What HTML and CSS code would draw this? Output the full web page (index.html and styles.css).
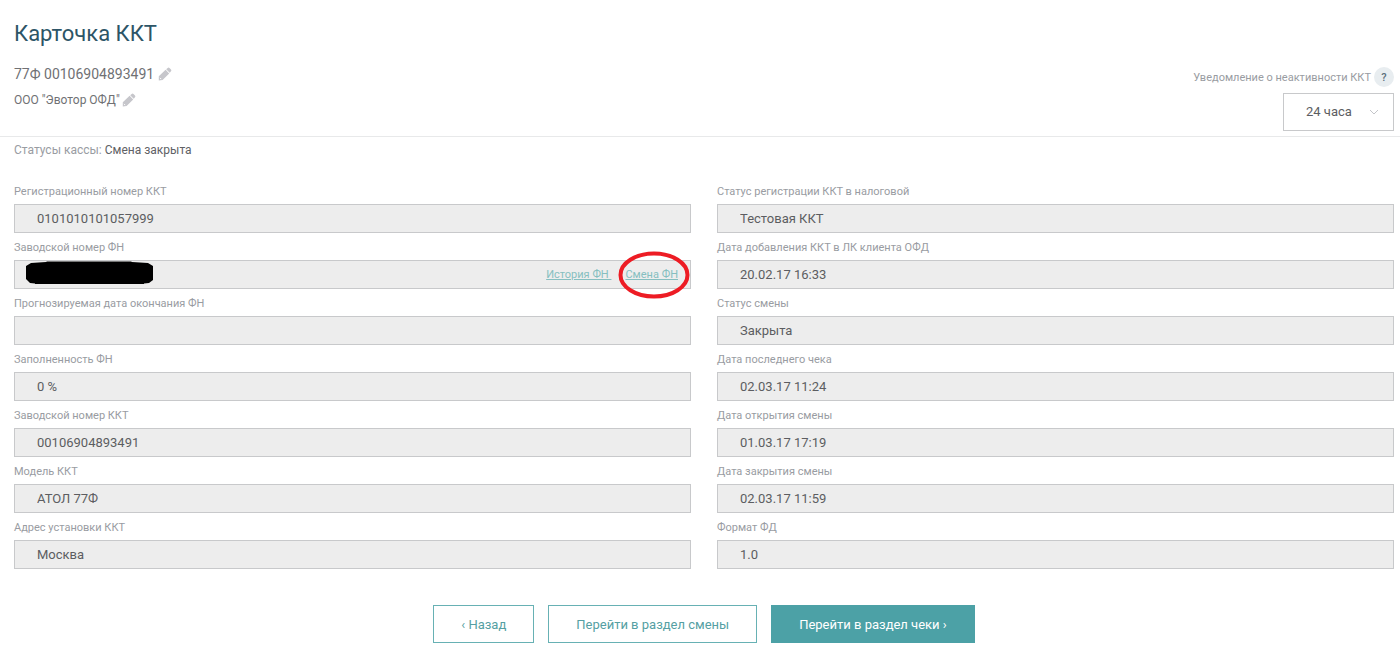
FILE: index.html
```html
<!DOCTYPE html>
<html lang="ru">
<head>
<meta charset="utf-8">
<meta name="viewport" content="width=device-width, initial-scale=1">
<title>Карточка ККТ</title>
<link rel="stylesheet" href="styles.css">
</head>
<body>
<header class="header">
  <div class="summary">
    <h1 class="title">Карточка ККТ</h1>
    <div class="name-row">
      <span>77Ф 00106904893491</span>
      <button class="edit" type="button" aria-label="Изменить название">
        <svg width="14" height="14" viewBox="0 0 14 14" aria-hidden="true"><path d="M.8 9.200 7.600 2.800l3.600 3.600L4.600 12.900.8 13.400ZM8.200 2.200 9.700.9q.9-.7 1.800.1L13 2.500q.8.900 0 1.800l-1.300 1.500Z"/><path class="tip" d="m2 10.900 1.200 1.200"/></svg>
      </button>
    </div>
    <div class="owner-row">
      <span>ООО "Эвотор ОФД"</span>
      <button class="edit" type="button" aria-label="Изменить организацию">
        <svg width="14" height="14" viewBox="0 0 14 14" aria-hidden="true"><path d="M.8 9.200 7.600 2.800l3.600 3.600L4.600 12.900.8 13.400ZM8.200 2.200 9.700.9q.9-.7 1.800.1L13 2.500q.8.900 0 1.800l-1.300 1.500Z"/><path class="tip" d="m2 10.900 1.200 1.200"/></svg>
      </button>
    </div>
  </div>
  <div class="notice">
    <div class="notice-caption">
      <label for="notice">Уведомление о неактивности ККТ</label>
      <button class="help" type="button">?</button>
    </div>
    <div class="select-box">
      <select class="select" id="notice"><option>24 часа</option></select>
      <svg class="chevron" width="10" height="6" viewBox="0 0 10 6" aria-hidden="true"><path d="m1 1 4 4 4-4"/></svg>
    </div>
  </div>
</header>
<main class="content">
  <p class="status">Статусы кассы: <span class="status-value">Смена закрыта</span></p>
  <form class="fields">
    <div class="column">
      <div class="field"><label class="label" for="reg">Регистрационный номер ККТ</label><input class="input" id="reg" value="0101010101057999" readonly></div>
      <div class="field">
        <label class="label" for="fn">Заводской номер ФН</label>
        <div class="input-box">
          <input class="input" id="fn" readonly>
          <svg class="redaction" width="128" height="24" viewBox="0 0 128 24" aria-hidden="true"><path d="M5 2 20 1 21 .5H105L106 1 122 2 127 5V19L123 22 118 22.500V23H9V22.500L4 22 0 18V5Z"/></svg>
          <div class="links">
            <a class="link" href="#history">История ФН&nbsp;</a>
            <a class="link marked" href="#change">Смена ФН<svg class="ring" width="72" height="48" viewBox="0 0 72 48" aria-hidden="true"><ellipse cx="36" cy="24" rx="33.500" ry="21.500"/></svg></a>
          </div>
        </div>
      </div>
      <div class="field"><label class="label" for="end">Прогнозируемая дата окончания ФН</label><input class="input" id="end" readonly></div>
      <div class="field"><label class="label" for="fill">Заполненность ФН</label><input class="input" id="fill" value="0 %" readonly></div>
      <div class="field"><label class="label" for="serial">Заводской номер ККТ</label><input class="input" id="serial" value="00106904893491" readonly></div>
      <div class="field"><label class="label" for="model">Модель ККТ</label><input class="input" id="model" value="АТОЛ 77Ф" readonly></div>
      <div class="field"><label class="label" for="address">Адрес установки ККТ</label><input class="input" id="address" value="Москва" readonly></div>
    </div>
    <div class="column">
      <div class="field"><label class="label" for="tax">Статус регистрации ККТ в налоговой</label><input class="input" id="tax" value="Тестовая ККТ" readonly></div>
      <div class="field"><label class="label" for="added">Дата добавления ККТ в ЛК клиента ОФД</label><input class="input" id="added" value="20.02.17 16:33" readonly></div>
      <div class="field"><label class="label" for="shift">Статус смены</label><input class="input" id="shift" value="Закрыта" readonly></div>
      <div class="field"><label class="label" for="last">Дата последнего чека</label><input class="input" id="last" value="02.03.17 11:24" readonly></div>
      <div class="field"><label class="label" for="opened">Дата открытия смены</label><input class="input" id="opened" value="01.03.17 17:19" readonly></div>
      <div class="field"><label class="label" for="closed">Дата закрытия смены</label><input class="input" id="closed" value="02.03.17 11:59" readonly></div>
      <div class="field"><label class="label" for="format">Формат ФД</label><input class="input" id="format" value="1.0" readonly></div>
    </div>
  </form>
  <div class="actions">
    <button class="button" type="button">‹ Назад</button>
    <button class="button" type="button">Перейти в раздел смены</button>
    <button class="button primary" type="button">Перейти в раздел чеки ›</button>
  </div>
</main>
</body>
</html>
```
FILE: styles.css
```css
* {
  box-sizing: border-box;
}

body {
  margin: 0;
  background: #fff;
  color: #5c5d61;
  font-family: Roboto, "Liberation Sans", sans-serif;
  font-size: 13px;
}

button,
input,
select {
  font: inherit;
  color: inherit;
}

.header {
  display: flex;
  justify-content: space-between;
  align-items: flex-end;
  padding: 20px 6px 5px 14px;
  border-bottom: 1px solid #e8e9ea;
}

.title {
  margin: 0;
  color: #2d5567;
  font-size: 22px;
  font-weight: 400;
  line-height: 28px;
}

.name-row,
.owner-row {
  display: flex;
  align-items: center;
  gap: 4px;
  color: #707174;
  line-height: 26px;
}

.name-row {
  margin-top: 13px;
  font-size: 14px;
}

.owner-row {
  gap: 2px;
  margin-bottom: 18px;
  font-size: 12px;
}

.edit {
  display: flex;
  padding: 0;
  border: 0;
  background: none;
  fill: #c6c6cb;
}

.tip {
  stroke: #fff;
}

.notice {
  display: flex;
  flex-direction: column;
  align-items: flex-end;
  gap: 6px;
}

.notice-caption {
  display: flex;
  align-items: center;
  gap: 3px;
  color: #999ca2;
  font-size: 11px;
}

.help {
  width: 20px;
  height: 20px;
  padding: 0;
  border: 0;
  border-radius: 50%;
  background: #e8edf0;
  color: #5c707c;
  font-size: 11px;
  font-weight: 500;
}

.select-box {
  position: relative;
}

.select {
  width: 111px;
  height: 38px;
  padding: 0 22px 2px;
  border: 1px solid #c8c9cb;
  border-radius: 0;
  background: #fff;
  appearance: none;
}

.chevron {
  position: absolute;
  top: 16px;
  right: 15px;
  fill: none;
  stroke: #c4c5c9;
  pointer-events: none;
}

.content {
  padding: 5px 6px 10px 14px;
}

.status {
  margin: 0 0 27px;
  color: #999ca2;
  font-size: 12px;
  line-height: 16px;
}

.status-value {
  color: #606165;
}

.fields {
  display: grid;
  grid-template-columns: 1fr 1fr;
  gap: 26px;
}

.column {
  display: grid;
  gap: 8px;
}

.label {
  display: block;
  height: 19px;
  color: #999ca2;
  font-size: 11px;
  line-height: 13px;
}

.input {
  display: block;
  width: 100%;
  height: 29px;
  padding: 0 22px;
  border: 1px solid #c8c9cb;
  border-radius: 0;
  background: #ededed;
}

.input-box {
  position: relative;
}

.redaction {
  position: absolute;
  top: 1px;
  left: 12px;
}

.links {
  position: absolute;
  top: 0;
  right: 13px;
  display: flex;
  gap: 14px;
  font-size: 11px;
  line-height: 29px;
}

.link {
  color: #86bfc0;
}

.marked {
  position: relative;
}

.ring {
  position: absolute;
  top: -9px;
  right: -12px;
  fill: none;
  stroke: #ed1c24;
  stroke-width: 4px;
  pointer-events: none;
}

.actions {
  display: flex;
  justify-content: center;
  gap: 14px;
  margin-top: 36px;
}

.button {
  height: 38px;
  padding: 0 27px;
  border: 1px solid #67b1b4;
  background: #fff;
  color: #559fa3;
}

.primary {
  border-color: #4ca1a6;
  background: #4ca1a6;
  color: #fff;
}
```
